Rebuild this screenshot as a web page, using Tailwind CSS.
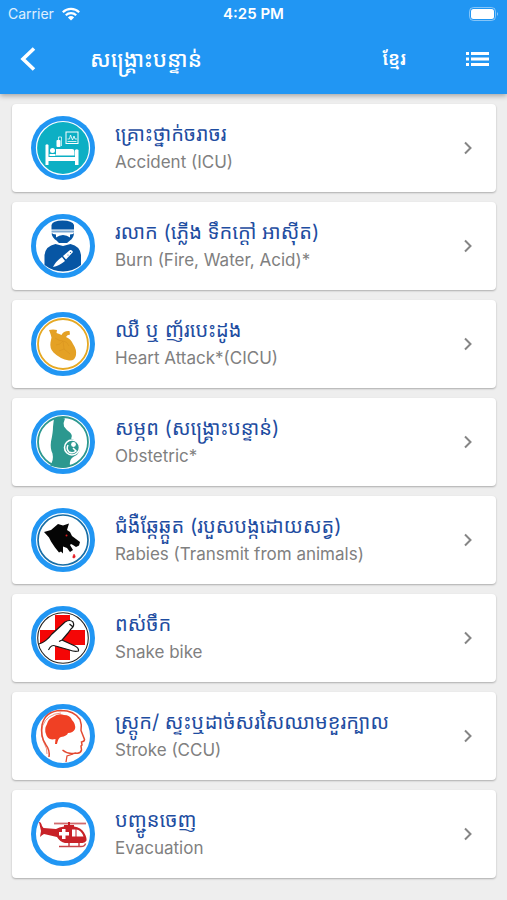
<!DOCTYPE html>
<html lang="km">
<head>
  <meta charset="UTF-8" />
  <meta name="viewport" content="width=device-width, initial-scale=1" />
  <title>សង្គ្រោះបន្ទាន់</title>
  <script src="https://cdn.jsdelivr.net/npm/@tailwindcss/browser@4"></script>
</head>
<body class="min-h-screen bg-[#eeeeee] font-['Inter','Noto_Sans_Khmer','Khmer_OS',sans-serif]">

  <header class="relative bg-[#2196f3] text-white shadow-[0_2px_5px_rgba(0,0,0,0.3)]">
    <!-- Status bar -->
    <div class="grid h-7 grid-cols-3 items-center px-2 text-[15px]">
      <div class="flex items-center gap-2 text-sm text-white/85">
        <span>Carrier</span>
        <svg class="h-3.5 w-[18px]" viewBox="0 0 18 14" fill="none" stroke="#fff" stroke-width="2.2">
          <path d="M.8 5.2a11.8 11.8 0 0 1 16.4 0M3.8 8.3a7.5 7.5 0 0 1 10.4 0" />
          <path d="M9 13.6 5.9 10.4a4.5 4.5 0 0 1 6.2 0z" fill="#fff" stroke="none" />
        </svg>
      </div>
      <div class="text-center font-semibold">4:25 PM</div>
      <svg class="h-3.5 w-[30px] justify-self-end" viewBox="0 0 30 14">
        <rect x=".5" y=".5" width="26" height="13" rx="4" fill="none" stroke="#fff" stroke-opacity=".45" />
        <rect x="2" y="2" width="23" height="10" rx="2.5" fill="#fff" />
        <path d="M28 5q2 2 0 4z" fill="#fff" fill-opacity=".5" />
      </svg>
    </div>

    <!-- Toolbar -->
    <div class="flex h-[66px] items-center pr-[17px] pb-1 pl-4">
      <button class="flex h-10 w-6 items-center justify-center" aria-label="Back">
        <svg class="h-6 w-4" viewBox="0 0 16 24" fill="none" stroke="#fff" stroke-width="3.6"><path d="M14 1.5 3 12l11 10.500" /></svg>
      </button>
      <h1 class="ml-[50px] flex-1 text-[22px] font-medium whitespace-nowrap">សង្គ្រោះបន្ទាន់</h1>
      <button class="mr-[60px] text-lg font-semibold">ខ្មែរ</button>
      <button class="flex h-10 w-6 items-center justify-center" aria-label="Menu">
        <svg class="h-4 w-6" viewBox="0 0 24 16" fill="#fff">
          <path d="M0 1h3v3H0zM5 1h18v3H5zM0 6.500h3v3H0zM5 6.500h18v3H5zM0 12h3v3H0zM5 12h18v3H5z" />
        </svg>
      </button>
    </div>
  </header>

  <main class="flex flex-col gap-2.5 pt-2.5 pr-[11px] pb-5 pl-3 text-[17px]">
    <a href="#accident" class="flex items-center rounded-[4px] bg-white py-3 pr-5 pl-[19px] shadow-[0_1px_2px_rgba(0,0,0,0.28)]">
      <svg class="size-16 shrink-0" viewBox="0 0 64 64">
        <circle cx="32" cy="32" r="32" fill="#2196f3" />
        <circle cx="32" cy="32" r="26.500" fill="#0cafc4" stroke="#fff" stroke-width="1.200" />
        <g fill="#fff">
          <path d="M14.500 29q1.500-1.500 3 0v12H44v-7q1.700-1.500 3.500 0v15H44v-4H17.500v4h-3z" />
          <circle cx="21.500" cy="34.500" r="2.500" />
          <path d="M18.500 38h6v2h-6zM25 33h16q2.500 0 2.500 3v3.500H25z" />
          <rect x="25.500" y="24" width="4" height="7" rx="1" />
        </g>
        <path d="M27.500 24v-3h3v9" fill="none" stroke="#fff" stroke-width=".7" />
        <rect x="35" y="16" width="12" height="11.500" fill="none" stroke="#fff" />
        <path d="M36.500 23h2l1-4 2 5 1.500-4 1 3h2M36.500 25.500h9" fill="none" stroke="#fff" stroke-width=".8" />
      </svg>
      <div class="ml-5 min-w-0 flex-1">
        <h2 class="h-7 text-xl leading-7 whitespace-nowrap text-[#1e4da1]">គ្រោះថ្នាក់ចរាចរ</h2>
        <p class="h-7 leading-7 text-[#808080]">Accident (ICU)</p>
      </div>
      <svg class="h-3.5 w-4 shrink-0" viewBox="0 0 16 14" fill="none" stroke="#858585" stroke-width="2"><path d="m5 1.500 5.500 5.500L5 12.500" /></svg>
    </a>

    <a href="#burn" class="flex items-center rounded-[4px] bg-white py-3 pr-5 pl-[19px] shadow-[0_1px_2px_rgba(0,0,0,0.28)]">
      <svg class="size-16 shrink-0" viewBox="0 0 64 64">
        <circle cx="32" cy="32" r="29.500" fill="#fff" stroke="#2196f3" stroke-width="5" />
        <g fill="#0756a4">
          <path d="M20.500 15.500V11q1-4.500 11-4.500T43 11v4.500z" />
          <path d="M20.500 19.500h22.500q-.5 4.500-4 7L36 29h-8l-2.500-2.500q-4-2.500-5-7z" />
          <path d="M13.500 51V41q1-9 11-11l7.500 2 7.500-2q9.500 2 10.500 11v10q-8 6.500-18 6.500T13.500 51z" />
        </g>
        <path d="M22 19h20v1l-3 .5v3q-3-2.500-7-2.500t-7 2.500v-3l-3-.5z" fill="#fff" />
        <path d="M20.500 17.500h22.500" stroke="#7ea9d2" stroke-width="2" />
        <path d="M22 53q3-6 9-10l3 4q-6 5-12 6z" fill="#fff" />
        <path d="m32 42 7-6q2-.5 3 2l-7 7.500z" fill="#fff" />
        <path d="m31.500 42.500 3.500 4" stroke="#0756a4" />
        <circle cx="37" cy="41" r=".6" fill="#0756a4" /><circle cx="39.500" cy="38.500" r=".6" fill="#0756a4" />
      </svg>
      <div class="ml-5 min-w-0 flex-1">
        <h2 class="h-7 text-xl leading-7 whitespace-nowrap text-[#1e4da1]">រលាក (ភ្លើង ទឹកក្ដៅ អាស៊ីត)</h2>
        <p class="h-7 leading-7 text-[#808080]">Burn (Fire, Water, Acid)*</p>
      </div>
      <svg class="h-3.5 w-4 shrink-0" viewBox="0 0 16 14" fill="none" stroke="#858585" stroke-width="2"><path d="m5 1.500 5.500 5.500L5 12.500" /></svg>
    </a>

    <a href="#heart" class="flex items-center rounded-[4px] bg-white py-3 pr-5 pl-[19px] shadow-[0_1px_2px_rgba(0,0,0,0.28)]">
      <svg class="size-16 shrink-0" viewBox="0 0 64 64">
        <circle cx="32" cy="32" r="29.500" fill="#fff" stroke="#2196f3" stroke-width="5" />
        <circle cx="32" cy="32" r="25" fill="none" stroke="#e5a823" stroke-width="1.800" />
        <path d="m18 18 4-.5 4 .5-.5 3q3 1 5 2 2-4.500 8-4l.5 3.500q-3 0-4 2.500 5 2 7 7 4 6 3 11-1 6-7 5.500-9-1.500-15.500-8-4-4-3-10l1-5q-1-4-2.500-7.500z" fill="#e4a125" />
        <path d="M24 26q4 3 8 3t6 5m-6-5q-3 4-7 4m7-4 1 8 6 5m-6-5-5 2" fill="none" stroke="#d89320" stroke-width=".6" />
      </svg>
      <div class="ml-5 min-w-0 flex-1">
        <h2 class="h-7 text-xl leading-7 whitespace-nowrap text-[#1e4da1]">ឈឺ ឬ ញ័របេះដូង</h2>
        <p class="h-7 leading-7 text-[#808080]">Heart Attack*(CICU)</p>
      </div>
      <svg class="h-3.5 w-4 shrink-0" viewBox="0 0 16 14" fill="none" stroke="#858585" stroke-width="2"><path d="m5 1.500 5.500 5.500L5 12.500" /></svg>
    </a>

    <a href="#obstetric" class="flex items-center rounded-[4px] bg-white py-3 pr-5 pl-[19px] shadow-[0_1px_2px_rgba(0,0,0,0.28)]">
      <svg class="size-16 shrink-0" viewBox="0 0 64 64">
        <circle cx="32" cy="32" r="29.500" fill="#fff" stroke="#2196f3" stroke-width="5" />
        <circle cx="32" cy="32" r="25" fill="none" stroke="#2c988f" stroke-width="1.800" />
        <path d="M23 8.500q5-2 11 0-2 4-1 8 2 3 6 6 3 3 1 6 8 3 9 10-1 6-6 8-5 2-4 10-9 3-20-1 4-5 2.500-12-2.500-5-1.500-12 2-9 2-14.500.5-5 1-8.500z" fill="#2c988f" />
        <circle cx="41" cy="37.500" r="7.500" fill="#2c988f" stroke="#fff" stroke-width="1.600" />
        <circle cx="42.500" cy="34.500" r="2.400" fill="#fff" />
        <path d="M37 35q-2 4 1 7 4 2 7-1l-3-3" fill="none" stroke="#fff" stroke-width="1.500" />
      </svg>
      <div class="ml-5 min-w-0 flex-1">
        <h2 class="h-7 text-xl leading-7 whitespace-nowrap text-[#1e4da1]">សម្ភព (សង្គ្រោះបន្ទាន់)</h2>
        <p class="h-7 leading-7 text-[#808080]">Obstetric*</p>
      </div>
      <svg class="h-3.5 w-4 shrink-0" viewBox="0 0 16 14" fill="none" stroke="#858585" stroke-width="2"><path d="m5 1.500 5.500 5.500L5 12.500" /></svg>
    </a>

    <a href="#rabies" class="flex items-center rounded-[4px] bg-white py-3 pr-5 pl-[19px] shadow-[0_1px_2px_rgba(0,0,0,0.28)]">
      <svg class="size-16 shrink-0" viewBox="0 0 64 64">
        <circle cx="32" cy="32" r="29.500" fill="#fff" stroke="#2196f3" stroke-width="5" />
        <circle cx="32" cy="32" r="25" fill="#fff" stroke="#176da5" stroke-width="1.700" />
        <path d="m13 24 7-2 7-6 5 1.500 6-2-2 6.500 3 2 2 4 8 6-1 3.500-3 1.500-3-2-2-1-1 1 3 5-3 2-3-4-4-1.500v7l-2-2-2 1-4-5-4-6-2-4z" fill="#050505" />
        <circle cx="35.500" cy="27.500" r="1" fill="#d91b22" />
        <path d="M43 46q2.500 3.500 0 4t0-4z" fill="#e51c23" stroke="#e51c23" stroke-width=".5" />
      </svg>
      <div class="ml-5 min-w-0 flex-1">
        <h2 class="h-7 text-xl leading-7 whitespace-nowrap text-[#1e4da1]">ជំងឺឆ្កែឆ្កួត (របួសបង្កដោយសត្វ)</h2>
        <p class="h-7 leading-7 text-[#808080]">Rabies (Transmit from animals)</p>
      </div>
      <svg class="h-3.5 w-4 shrink-0" viewBox="0 0 16 14" fill="none" stroke="#858585" stroke-width="2"><path d="m5 1.500 5.500 5.500L5 12.500" /></svg>
    </a>

    <a href="#snake" class="flex items-center rounded-[4px] bg-white py-3 pr-5 pl-[19px] shadow-[0_1px_2px_rgba(0,0,0,0.28)]">
      <svg class="size-16 shrink-0" viewBox="0 0 64 64">
        <circle cx="32" cy="32" r="29.500" fill="#fff" stroke="#2196f3" stroke-width="5" />
        <path d="M24 9h15v15h15v15H39v15H24V39H9V24h15z" fill="#f50606" />
        <path d="M8 38q7-2 13-10l13-12q5-3 8 0 2 4-2 7l-3 4-6 7 13 6q4 2 3.500 5-4 1-9-1l-14-4q-4-2-7 4l-5 5q-4-5-4.500-11z" fill="#fff" />
        <path d="M8 38q7-2 13-10l13-12q5-3 8 0 2 4-2 7l-3 4-6 7 13 6q4 2 3.500 5-4 1-9-1l-14-4q-4-2-7 4M38.500 18l3 2.500M28 35.500l3-1.500" fill="none" stroke="#171717" stroke-width="1.200" />
        <circle cx="32" cy="32" r="25.300" fill="none" stroke="#222" stroke-width="1.100" />
      </svg>
      <div class="ml-5 min-w-0 flex-1">
        <h2 class="h-7 text-xl leading-7 whitespace-nowrap text-[#1e4da1]">ពស់ចឹក</h2>
        <p class="h-7 leading-7 text-[#808080]">Snake bike</p>
      </div>
      <svg class="h-3.5 w-4 shrink-0" viewBox="0 0 16 14" fill="none" stroke="#858585" stroke-width="2"><path d="m5 1.500 5.500 5.500L5 12.500" /></svg>
    </a>

    <a href="#stroke" class="flex items-center rounded-[4px] bg-white py-3 pr-5 pl-[19px] shadow-[0_1px_2px_rgba(0,0,0,0.28)]">
      <svg class="size-16 shrink-0" viewBox="0 0 64 64">
        <circle cx="32" cy="32" r="29.500" fill="#fff" stroke="#2196f3" stroke-width="5" />
        <path d="M15 30q-2-5 1-10 1-5 6-7 5-4 11-2 6 0 8 5 4 4 3 9-2 4-7 4-1 3-7 4-3 1-4 7h-2l.5-5q-8 2-9.500-5z" fill="#f04024" />
        <g fill="none" stroke="#e34a32">
          <path d="M18 53q1-7-3-12-6-9-4-20Q14 7 30 6.500q13 0 19 9 2 5 1 11l3.500 9q0 2-3 2.500l.5 3-1 1 .5 4q-1 4-6 3-7 2-13-3" stroke-width="1.500" />
          <path d="M16 50q0-6-2-9-5-9-2.500-19Q16 10 30 9" stroke-width=".6" />
          <path d="m35 58 1-6 6-2" stroke-width="1.300" />
        </g>
      </svg>
      <div class="ml-5 min-w-0 flex-1">
        <h2 class="h-7 text-xl leading-7 whitespace-nowrap text-[#1e4da1]">ស្ត្រូក/ ស្ទះឬដាច់សរសៃឈាមខួរក្បាល</h2>
        <p class="h-7 leading-7 text-[#808080]">Stroke (CCU)</p>
      </div>
      <svg class="h-3.5 w-4 shrink-0" viewBox="0 0 16 14" fill="none" stroke="#858585" stroke-width="2"><path d="m5 1.500 5.500 5.500L5 12.500" /></svg>
    </a>

    <a href="#evacuation" class="flex items-center rounded-[4px] bg-white py-3 pr-5 pl-[19px] shadow-[0_1px_2px_rgba(0,0,0,0.28)]">
      <svg class="size-16 shrink-0" viewBox="0 0 64 64">
        <circle cx="32" cy="32" r="29.500" fill="#fff" stroke="#2196f3" stroke-width="5" />
        <path d="M8 20q2-.5 3 4l1.500 2L25 27q3-2 8-2.500V23h10v1.500q7 1 10 6 3 5 2.500 8-1 2-4 2.500H34q-5-1-8-6l-13-3q-2 1-4 3l1-6z" fill="#c82127" />
        <path d="M23 21.500h32" stroke="#d26b6e" stroke-width="1.800" />
        <path d="M38 20v4" stroke="#c82127" stroke-width="2" />
        <path d="M28 44.500h22q4 0 4.500-3M38 41v3.500m10-3.500v3.500" fill="none" stroke="#c94449" stroke-width="1.500" />
        <path d="M31 27h3.500v3H38v3.500h-3.500V37H31v-3.500h-3V30h3zM41 27.500h3.500v7H41zM45.500 27.500q5 1 7 7h-7z" fill="#fff" />
      </svg>
      <div class="ml-5 min-w-0 flex-1">
        <h2 class="h-7 text-xl leading-7 whitespace-nowrap text-[#1e4da1]">បញ្ជូនចេញ</h2>
        <p class="h-7 leading-7 text-[#808080]">Evacuation</p>
      </div>
      <svg class="h-3.5 w-4 shrink-0" viewBox="0 0 16 14" fill="none" stroke="#858585" stroke-width="2"><path d="m5 1.500 5.500 5.500L5 12.500" /></svg>
    </a>
  </main>

</body>
</html>
